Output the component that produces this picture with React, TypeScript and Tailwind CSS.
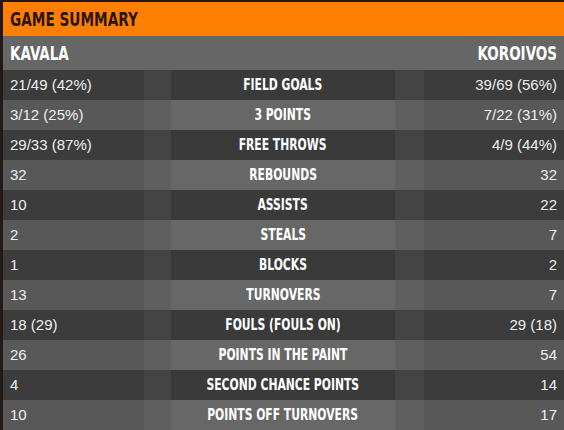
const rows: [string, string, string][] = [
  ["21/49 (42%)", "FIELD GOALS", "39/69 (56%)"],
  ["3/12 (25%)", "3 POINTS", "7/22 (31%)"],
  ["29/33 (87%)", "FREE THROWS", "4/9 (44%)"],
  ["32", "REBOUNDS", "32"],
  ["10", "ASSISTS", "22"],
  ["2", "STEALS", "7"],
  ["1", "BLOCKS", "2"],
  ["13", "TURNOVERS", "7"],
  ["18 (29)", "FOULS (FOULS ON)", "29 (18)"],
  ["26", "POINTS IN THE PAINT", "54"],
  ["4", "SECOND CHANCE POINTS", "14"],
  ["10", "POINTS OFF TURNOVERS", "17"],
];

// condensed display font, squeezed to match the narrow heading face
const display = "font-['DejaVu_Sans_Condensed','DejaVu_Sans',sans-serif] font-bold";
const body = "font-['Liberation_Sans','Arial',sans-serif]";

function StatRow({ row, dark }: { row: [string, string, string]; dark: boolean }) {
  const side = dark ? "bg-[#3c3c3c]" : "bg-[#585858]";
  const strip = dark ? "bg-[#444444]" : "bg-[#5f5f5f]";
  const mid = dark ? "bg-[#3a3a3a]" : "bg-[#676767]";
  return (
    <div className="grid h-[30px] grid-cols-[141px_27px_224px_29px_140px]">
      <div className={`${side} ${body} flex items-center pl-[7px] text-[15px] text-[#eeeeee]`}>{row[0]}</div>
      <div className={strip}></div>
      <div className={`${mid} ${display} flex items-center justify-center text-[16px] text-white`}>
        <span className="inline-block origin-center scale-x-[0.75] whitespace-nowrap">{row[1]}</span>
      </div>
      <div className={strip}></div>
      <div className={`${side} ${body} flex items-center justify-end pr-[7px] text-[15px] text-[#eeeeee]`}>{row[2]}</div>
    </div>
  );
}

export default function App() {
  return (
    <div className="h-[430px] w-[564px] overflow-hidden bg-[#221a16] pl-[3px] pt-[2px]">
      <div className={`flex h-[34px] items-center bg-[#ff8000] pl-[7px] text-[20px] text-[#2a1408] ${display}`}>
        <span className="inline-block origin-left scale-x-[0.76] whitespace-nowrap">GAME SUMMARY</span>
      </div>
      <div className={`flex h-[34px] items-center justify-between bg-[#666666] px-[7px] text-[20px] text-white ${display}`}>
        <span className="inline-block origin-left scale-x-[0.75]">KAVALA</span>
        <span className="inline-block origin-right scale-x-[0.75]">KOROIVOS</span>
      </div>
      {rows.map((r, i) => (
        <StatRow key={r[1]} row={r} dark={i % 2 === 0} />
      ))}
    </div>
  );
}
